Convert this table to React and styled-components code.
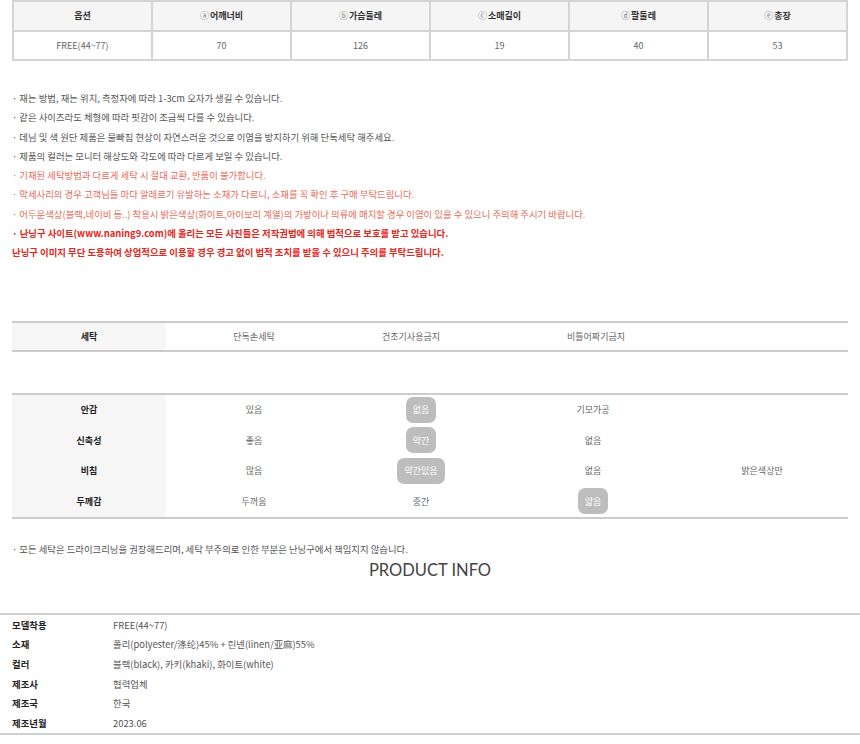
import React from 'react'
import styled, { createGlobalStyle } from 'styled-components'

const Global = createGlobalStyle`
  body {
    margin: 0;
    background: #fff;
    font-family: "Noto Sans CJK KR", "Noto Sans", sans-serif;
  }
`

const Page = styled.div`
  width: 860px;
  display: flex;
  flex-direction: column;
`

const SizeTable = styled.table`
  margin: 0 12px;
  width: 836px;
  border-collapse: collapse;
  table-layout: fixed;
  font-size: 9px;
  th, td {
    border: 2px solid #d4d4d4;
    text-align: center;
    vertical-align: middle;
    padding: 0;
    line-height: 12px;
  }
  th {
    height: 28px;
    background: #f5f5f5;
    color: #333;
    font-weight: 700;
  }
  td {
    height: 27px;
    color: #666;
  }
`

const Mark = styled.span`
  font-weight: 400;
  color: #777;
  margin-right: 1px;
`

const Notes = styled.ul`
  list-style: none;
  margin: 28px 0 0;
  padding: 0 12px;
  font-size: 9.4px;
  line-height: 19.3px;
`

const Note = styled.li`
  color: ${p => (p.$tone === 'red' ? '#e66b58' : p.$tone === 'strong' ? '#e1261a' : '#555')};
  font-weight: ${p => (p.$tone === 'strong' ? 700 : 400)};
  white-space: nowrap;
`

const Wash = styled.div`
  margin: 58px 12px 0;
  display: grid;
  grid-template-columns: 154px 176px 138px 232px 1fr;
  border-top: 2px solid #ccc;
  border-bottom: 2px solid #ccc;
  font-size: 9px;
`

const Fabric = styled.div`
  margin: 41px 12px 0;
  display: grid;
  grid-template-columns: 154px 176px 158px 186px 152px 1fr;
  grid-auto-rows: 30.5px;
  border-top: 2px solid #ccc;
  border-bottom: 2px solid #ccc;
  font-size: 9px;
`

const Label = styled.div`
  background: #f6f6f6;
  color: #222;
  font-weight: 700;
  display: flex;
  align-items: center;
  justify-content: center;
  height: ${p => p.$h || 'auto'};
`

const Cell = styled.div`
  color: #666;
  display: flex;
  align-items: center;
  justify-content: center;
`

const Pill = styled.span`
  background: #bdbdbd;
  color: #fff;
  border-radius: 7px;
  padding: 0 7px;
  height: 26px;
  display: flex;
  align-items: center;
`

const Care = styled.p`
  margin: 23px 12px 0;
  font-size: 9.4px;
  color: #555;
  line-height: 14px;
`

const Title = styled.h2`
  margin: 3px 0 0;
  text-align: center;
  font-family: Lato, "Open Sans", sans-serif;
  font-weight: 400;
  font-size: 16.5px;
  color: #444;
  line-height: 22px;
`

const Info = styled.div`
  margin-top: 32px;
  border-top: 2px solid #d0d0d0;
  border-bottom: 2px solid #d0d0d0;
  padding: 0 12px;
  display: grid;
  grid-template-columns: 101px 1fr;
  grid-auto-rows: 19.7px;
  align-items: center;
  font-size: 9.4px;
`

const InfoKey = styled.div`
  color: #222;
  font-weight: 700;
`

const InfoVal = styled.div`
  color: #555;
`

const sizes = [
  ['ⓐ', '어깨너비', '70'],
  ['ⓑ', '가슴둘레', '126'],
  ['ⓒ', '소매길이', '19'],
  ['ⓓ', '팔둘레', '40'],
  ['ⓔ', '총장', '53'],
]

const notes = [
  ['', '· 재는 방법, 재는 위치, 측정자에 따라 1-3cm 오차가 생길 수 있습니다.'],
  ['', '· 같은 사이즈라도 체형에 따라 핏감이 조금씩 다를 수 있습니다.'],
  ['', '· 데님 및 색 원단 제품은 물빠짐 현상이 자연스러운 것으로 이염을 방지하기 위해 단독세탁 해주세요.'],
  ['', '· 제품의 컬러는 모니터 해상도와 각도에 따라 다르게 보일 수 있습니다.'],
  ['red', '· 기재된 세탁방법과 다르게 세탁 시 절대 교환, 반품이 불가합니다.'],
  ['red', '· 악세사리의 경우 고객님들 마다 알레르기 유발하는 소재가 다르니, 소재를 꼭 확인 후 구매 부탁드립니다.'],
  ['red', '· 어두운색상(블랙,네이비 등..) 착용시 밝은색상(화이트,아이보리 계열)의 가방이나 의류에 매치할 경우 이염이 있을 수 있으니 주의해 주시기 바랍니다.'],
  ['strong', '· 난닝구 사이트(www.naning9.com)에 올리는 모든 사진들은 저작권법에 의해 법적으로 보호를 받고 있습니다.'],
  ['strong', '난닝구 이미지 무단 도용하여 상업적으로 이용할 경우 경고 없이 법적 조치를 받을 수 있으니 주의를 부탁드립니다.'],
]

const fabric = [
  ['안감', ['있음', '없음', '기모가공', '', ''], 1],
  ['신축성', ['좋음', '약간', '없음', '', ''], 1],
  ['비침', ['많음', '약간있음', '없음', '밝은색상만', ''], 1],
  ['두께감', ['두꺼움', '중간', '얇음', '', ''], 2],
]

const info = [
  ['모델착용', 'FREE(44~77)'],
  ['소재', '폴리(polyester/涤纶)45% + 린넨(linen/亚麻)55%'],
  ['컬러', '블랙(black), 카키(khaki), 화이트(white)'],
  ['제조사', '협력업체'],
  ['제조국', '한국'],
  ['제조년월', '2023.06'],
]

const App = () => {
  return (
    <Page>
      <Global />
      <SizeTable>
        <thead>
          <tr>
            <th>옵션</th>
            {sizes.map(s => (
              <th key={s[0]}><Mark>{s[0]}</Mark>{s[1]}</th>
            ))}
          </tr>
        </thead>
        <tbody>
          <tr>
            <td>FREE(44~77)</td>
            {sizes.map(s => <td key={s[0]}>{s[2]}</td>)}
          </tr>
        </tbody>
      </SizeTable>

      <Notes>
        {notes.map((n, i) => <Note key={i} $tone={n[0]}>{n[1]}</Note>)}
      </Notes>

      <Wash>
        <Label $h="27px">세탁</Label>
        <Cell>단독손세탁</Cell>
        <Cell>건조기사용금지</Cell>
        <Cell>비틀어짜기금지</Cell>
        <Cell />
      </Wash>

      <Fabric>
        {fabric.map(([k, vals, pill]) => (
          <React.Fragment key={k}>
            <Label>{k}</Label>
            {vals.map((v, i) => (
              <Cell key={i}>{i === pill ? <Pill>{v}</Pill> : v}</Cell>
            ))}
          </React.Fragment>
        ))}
      </Fabric>

      <Care>· 모든 세탁은 드라이크리닝을 권장해드리며, 세탁 부주의로 인한 부분은 난닝구에서 책임지지 않습니다.</Care>
      <Title>PRODUCT INFO</Title>

      <Info>
        {info.map(([k, v]) => (
          <React.Fragment key={k}>
            <InfoKey>{k}</InfoKey>
            <InfoVal>{v}</InfoVal>
          </React.Fragment>
        ))}
      </Info>
    </Page>
  )
}

export default App
